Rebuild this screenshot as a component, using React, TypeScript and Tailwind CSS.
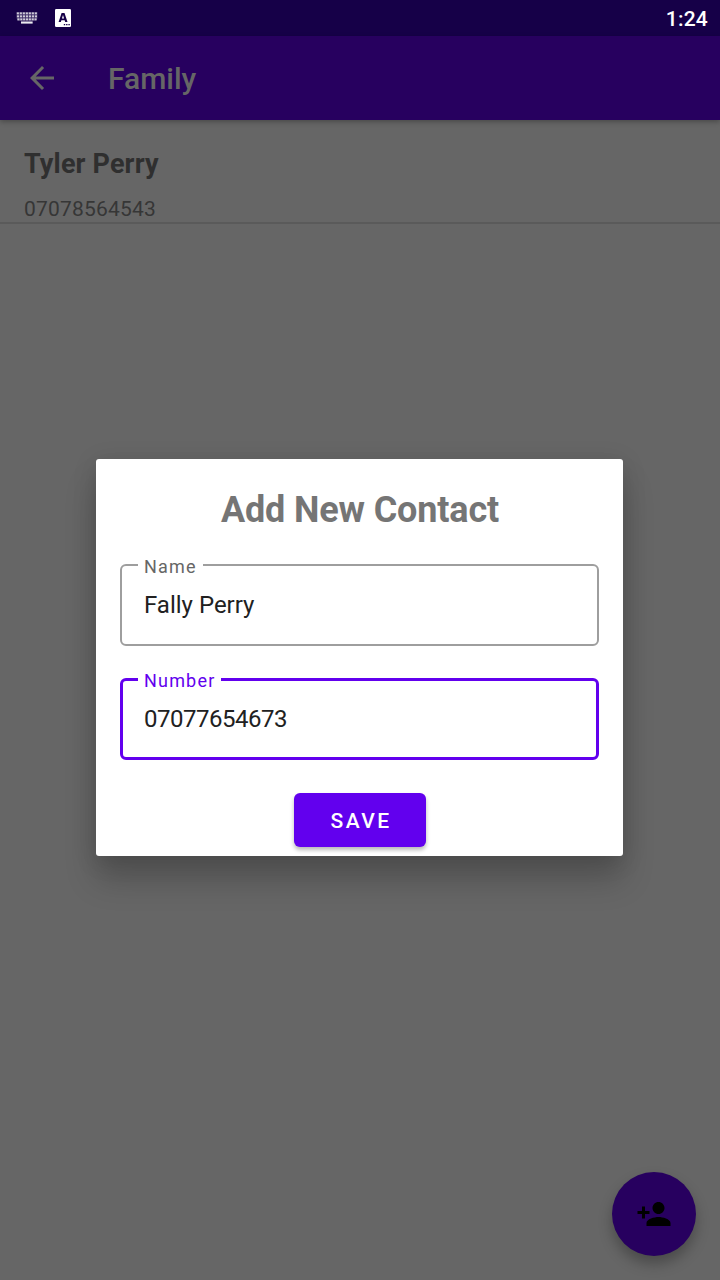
import React from "react";

function KeyboardIcon() {
  const rows = [
    { y: 0.4, x: 0.8, step: 3, count: 7 },
    { y: 3.4, x: 0.9, step: 3, count: 7 },
    { y: 6.4, x: 1.4, step: 2.85, count: 7 },
  ];
  return (
    <svg className="h-3 w-[22px]" viewBox="0 0 22 12" fill="#fff">
      <path d="M.5 0h21v6l-1.2 3H16.6v3H5V9H1.6L.5 6z" opacity=".2" />
      {rows.map((row) =>
        Array.from({ length: row.count }, (_, i) => (
          <rect key={`${row.y}-${i}`} x={row.x + i * row.step} y={row.y} width="2.1" height="1.9" opacity=".75" />
        )),
      )}
      <rect x="5" y="9.6" width="11.6" height="1.9" opacity=".9" />
    </svg>
  );
}

function InputMethodIcon() {
  return (
    <svg className="h-[18px] w-4" viewBox="0 0 16 18">
      <rect width="16" height="18" rx="1.2" fill="#fff" />
      <path
        fill="#160048"
        fillRule="evenodd"
        d="M6.6 4h2.9l3 9h-2.3l-.55-1.8H6.4L5.8 13H3.6zM6.9 9.4h2.2L8 6z"
      />
      <path fill="#160048" d="M8.8 15h1.4v1.3H8.8zM11.1 15h1.4v1.3h-1.4zM13.4 15h1.4v1.3h-1.4z" />
    </svg>
  );
}

function StatusBar() {
  return (
    <div className="flex h-9 items-center bg-[#160048] pr-3 pl-4">
      <KeyboardIcon />
      <div className="ml-[17px]">
        <InputMethodIcon />
      </div>
      <span className="ml-auto pt-0.5 text-[21px] leading-6 font-medium tracking-[0.2px] text-white">1:24</span>
    </div>
  );
}

function AppBar() {
  return (
    <header className="relative flex h-[84px] items-center bg-[#27005f] pl-6 shadow-[0_2px_5px_rgba(0,0,0,0.28)]">
      <svg className="h-9 w-9" viewBox="0 0 24 24" fill="#666">
        <path d="M20 11H7.83l5.59-5.59L12 4l-8 8 8 8 1.41-1.41L7.83 13H20v-2z" />
      </svg>
      <h1 className="ml-12 pt-0.5 text-[30px] leading-9 font-medium text-[#666]">Family</h1>
    </header>
  );
}

type FieldProps = {
  label: string;
  value: string;
  focused?: boolean;
};

function OutlinedField({ label, value, focused }: FieldProps) {
  return (
    <fieldset
      className={
        focused
          ? "h-[92px] rounded-[6px] border-[3px] border-[#6200ee] pl-[15px]"
          : "h-[92px] rounded-[6px] border-2 border-[#9e9e9e] pl-4"
      }
    >
      <legend
        className={
          focused
            ? "h-[23px] w-[83px] pl-1.5 text-[18px] leading-[25px] tracking-[0.066em] text-[#6200ee]"
            : "h-[22px] w-[65px] pl-1.5 text-[18px] leading-[25px] tracking-[0.066em] text-[#666]"
        }
      >
        {label}
      </legend>
      <div
        className={
          focused
            ? "pt-3.5 pl-1.5 text-[24px] leading-7 tracking-[-0.5px] text-[#212121]"
            : "pt-[15px] pl-1.5 text-[24px] leading-7 text-[#212121]"
        }
      >
        {value}
      </div>
    </fieldset>
  );
}

function AddContactDialog() {
  return (
    <div className="absolute inset-x-0 top-9 bottom-0 flex items-center justify-center pr-px pb-px">
      <div
        role="dialog"
        className="flex h-[397px] w-[527px] flex-col rounded-[3px] bg-white px-6 pt-[30px] shadow-[0_24px_32px_rgba(0,0,0,0.2),0_4px_24px_rgba(0,0,0,0.13)]"
      >
        <h2 className="pl-px text-center text-[36px] leading-[42px] font-bold tracking-[-0.15px] text-[#757575]">
          Add New Contact
        </h2>
        <div className="mt-[23px] flex flex-col gap-[22px]">
          <OutlinedField label="Name" value="Fally Perry" />
          <OutlinedField label="Number" value="07077654673" focused />
        </div>
        <button className="mt-[33px] h-[54px] w-[132px] shrink-0 self-center rounded-[6px] bg-[#6200ee] pt-0.5 pl-[3px] text-[21px] leading-6 font-medium tracking-[2.4px] text-white shadow-[0_3px_4px_rgba(0,0,0,0.28)]">
          SAVE
        </button>
      </div>
    </div>
  );
}

export default function App() {
  return (
    <div className="relative flex h-[1280px] w-[720px] flex-col overflow-hidden bg-[#666] font-['Roboto',sans-serif]">
      <StatusBar />
      <AppBar />
      <main className="flex flex-1 flex-col">
        <div className="flex h-[104px] flex-col border-b-2 border-[#5a5a5a] px-6 pt-7">
          <span className="text-[27px] leading-8 font-bold tracking-[0.15px] text-[#2f2f2f]">Tyler Perry</span>
          <span className="mt-[17px] text-[21px] leading-[25px] tracking-[0.2px] text-[#363636]">07078564543</span>
        </div>
        <button className="mt-auto mr-6 mb-6 flex h-[84px] w-[84px] items-center justify-center self-end rounded-full bg-[#27005f] shadow-[0_8px_14px_rgba(0,0,0,0.28)]">
          <svg className="h-9 w-9" viewBox="0 0 24 24" fill="#000">
            <path d="M15 12c2.21 0 4-1.79 4-4s-1.79-4-4-4-4 1.79-4 4 1.79 4 4 4zm-9-2V7H4v3H1v2h3v3h2v-3h3v-2H6zm9 4c-2.67 0-8 1.34-8 4v2h16v-2c0-2.66-5.33-4-8-4z" />
          </svg>
        </button>
      </main>
      <AddContactDialog />
    </div>
  );
}
